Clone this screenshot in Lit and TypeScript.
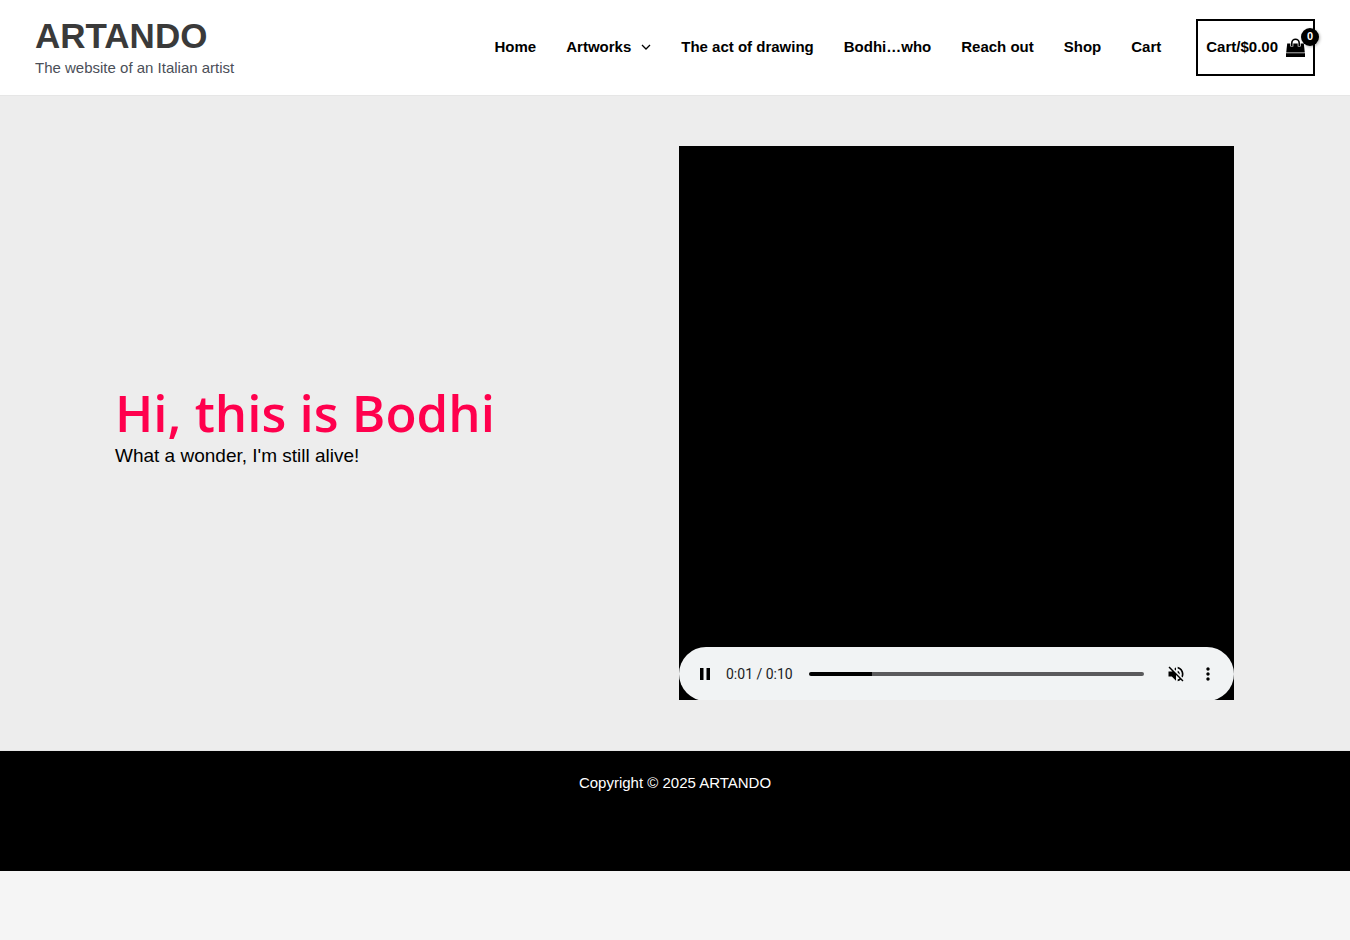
import { LitElement, html, css, svg } from "lit";
import { customElement, property, state } from "lit/decorators.js";
import { styleMap } from "lit/directives/style-map.js";

interface NavItem {
  label: string;
  submenu?: boolean;
}

const NAV: NavItem[] = [
  { label: "Home" },
  { label: "Artworks", submenu: true },
  { label: "The act of drawing" },
  { label: "Bodhi…who" },
  { label: "Reach out" },
  { label: "Shop" },
  { label: "Cart" },
];

const chevron = svg`<path d="M1 1 L5 5 L9 1" fill="none" stroke="currentColor" stroke-width="1.3" />`;

@customElement("site-header")
export class SiteHeader extends LitElement {
  static styles = css`
    :host {
      display: block;
      background: #fff;
      border-bottom: 1px solid #e6e6e6;
    }
    .bar {
      display: flex;
      align-items: center;
      justify-content: space-between;
      min-height: 95px;
      padding: 0 35px;
      box-sizing: border-box;
    }
    a {
      color: inherit;
      text-decoration: none;
    }
    .title {
      margin: 0;
      font-size: 35px;
      line-height: 40px;
      font-weight: 700;
      color: #3a3a3a;
    }
    .tagline {
      margin: 0;
      font-size: 15px;
      line-height: 24px;
      color: #4b4f58;
    }
    .right {
      display: flex;
      align-items: center;
      gap: 35px;
    }
    .menu {
      display: flex;
      gap: 30px;
      margin: 0;
      padding: 0 0 2px;
      list-style: none;
      font-size: 15px;
      line-height: 24px;
      font-weight: 700;
      white-space: nowrap;
    }
    .link {
      display: flex;
      align-items: center;
      gap: 10px;
    }
    .cart {
      display: flex;
      align-items: center;
      gap: 8px;
      height: 57px;
      padding: 0 8px;
      box-sizing: border-box;
      border: 2px solid #000;
      font-size: 15px;
      line-height: 24px;
      font-weight: 700;
      white-space: nowrap;
    }
    .total {
      padding-bottom: 2px;
    }
    .bag {
      position: relative;
      display: block;
      width: 19px;
      height: 20px;
    }
    .bag svg {
      display: block;
    }
    .count {
      position: absolute;
      top: -10px;
      right: -14px;
      width: 18px;
      height: 18px;
      border-radius: 50%;
      background: #000;
      color: #fff;
      font-size: 11px;
      line-height: 17px;
      text-align: center;
      box-shadow: 1px 1px 3px rgba(0, 0, 0, 0.3);
    }
  `;

  render() {
    return html`
      <header class="bar">
        <div>
          <p class="title"><a href="#">ARTANDO</a></p>
          <p class="tagline">The website of an Italian artist</p>
        </div>
        <div class="right">
          <nav aria-label="Site">
            <ul class="menu">
              ${NAV.map(
                (item) => html`<li>
                  <a class="link" href="#"
                    >${item.label}${item.submenu
                      ? html`<svg width="10" height="6" viewBox="0 0 10 6" aria-hidden="true">${chevron}</svg>`
                      : null}</a
                  >
                </li>`
              )}
            </ul>
          </nav>
          <a class="cart" href="#">
            <span class="total">Cart/$0.00</span>
            <span class="bag">
              <svg width="19" height="20" viewBox="0 0 19 20" aria-hidden="true">
                <path d="M1.2 5.6h16.6l1 8.9H.2z" fill="#000" />
                <path d="M0 15.2h19V19H0z" fill="#000" />
                <path d="M5.8 8.6V5a3.7 3.7 0 0 1 7.4 0V8.6" fill="none" stroke="#fff" stroke-width="3" />
                <path d="M5.8 8V5a3.7 3.7 0 0 1 7.4 0V8" fill="none" stroke="#000" stroke-width="1.6" />
              </svg>
              <span class="count">0</span>
            </span>
          </a>
        </div>
      </header>
    `;
  }
}

@customElement("media-player")
export class MediaPlayer extends LitElement {
  @property({ type: Number }) duration = 10;
  @state() private position = 1.88;

  static styles = css`
    :host {
      display: flex;
      flex-direction: column;
      justify-content: flex-end;
      width: 100%;
      max-width: 555px;
      height: 554px;
      background: #000;
      overflow: hidden;
    }
    .controls {
      display: flex;
      align-items: center;
      height: 54px;
      flex: none;
      margin-bottom: -1px;
      padding: 0 10px;
      border-radius: 27px;
      background: #f1f3f4;
    }
    button {
      display: flex;
      align-items: center;
      justify-content: center;
      width: 32px;
      height: 32px;
      padding: 0;
      border: 0;
      background: none;
      color: #000;
    }
    .time {
      margin: 0 16px 0 5px;
      font: 14px/20px Roboto, "Liberation Sans", sans-serif;
      color: #202124;
      white-space: nowrap;
    }
    .seek {
      flex: 1;
      min-width: 0;
      height: 4px;
      margin: 0 16px 0 0;
      border-radius: 2px;
      appearance: none;
      background: linear-gradient(#000, #000) 0 0 / var(--played) 100% no-repeat #5a5a5c;
    }
    .seek::-webkit-slider-thumb {
      appearance: none;
      width: 1px;
      height: 4px;
      background: transparent;
    }
  `;

  private onSeek(e: Event) {
    this.position = Number((e.target as HTMLInputElement).value);
  }

  private clock(seconds: number) {
    return `0:${String(Math.floor(seconds)).padStart(2, "0")}`;
  }

  render() {
    const played = { "--played": `${(this.position / this.duration) * 100}%` };
    return html`
      <div class="controls">
        <button aria-label="Pause">
          <svg width="12" height="12" viewBox="0 0 12 12" aria-hidden="true">
            <path d="M1 0h3.5v12H1zM7.5 0H11v12H7.5z" fill="currentColor" />
          </svg>
        </button>
        <span class="time">${this.clock(this.position)} / ${this.clock(this.duration)}</span>
        <input
          class="seek"
          type="range"
          aria-label="Seek"
          min="0"
          step="0.01"
          .max=${String(this.duration)}
          .value=${String(this.position)}
          style=${styleMap(played)}
          @input=${this.onSeek}
        />
        <button aria-label="Unmute">
          <svg width="20" height="20" viewBox="0 0 24 24" fill="currentColor" aria-hidden="true">
            <path
              d="M16.5 12c0-1.77-1.02-3.29-2.5-4.03v2.21l2.45 2.45c.03-.2.05-.41.05-.63zm2.5 0c0 .94-.2 1.82-.54 2.64l1.51 1.51C20.63 14.91 21 13.5 21 12c0-4.28-2.99-7.86-7-8.77v2.06c2.89.86 5 3.54 5 6.71zM4.27 3L3 4.27 7.73 9H3v6h4l5 5v-6.73l4.25 4.25c-.67.52-1.42.93-2.25 1.18v2.06c1.38-.31 2.63-.95 3.69-1.81L19.73 21 21 19.73l-9-9L4.27 3zM12 4L9.91 6.09 12 8.18V4z"
            />
          </svg>
        </button>
        <button aria-label="More options">
          <svg width="20" height="20" viewBox="0 0 24 24" fill="currentColor" aria-hidden="true">
            <path
              d="M12 8c1.1 0 2-.9 2-2s-.9-2-2-2-2 .9-2 2 .9 2 2 2zm0 2c-1.1 0-2 .9-2 2s.9 2 2 2 2-.9 2-2-.9-2-2-2zm0 6c-1.1 0-2 .9-2 2s.9 2 2 2 2-.9 2-2-.9-2-2-2z"
            />
          </svg>
        </button>
      </div>
    `;
  }
}

@customElement("app-root")
export class AppRoot extends LitElement {
  static styles = css`
    :host {
      display: block;
      min-height: 100vh;
      background: #f5f5f5;
      color: #000;
      font-family: "Liberation Sans", Arial, sans-serif;
    }
    .hero {
      padding: 50px 20px;
      background: #ededed;
      border-bottom: 1px solid #e6e6e6;
    }
    .columns {
      display: grid;
      grid-template-columns: 1fr 1fr;
      gap: 8px;
      align-items: center;
      max-width: 1120px;
      margin: 0 auto;
    }
    .intro {
      padding-top: 8px;
    }
    .heading {
      margin: 0;
      font-family: "Open Sans", "Noto Sans", sans-serif;
      font-size: 51px;
      line-height: 58px;
      font-weight: 600;
      color: #ff004d;
    }
    .lead {
      margin: 0;
      font-size: 19px;
      line-height: 30px;
    }
    .footer {
      padding: 20px 20px 76px;
      background: #000;
      color: #fff;
      font-size: 15px;
      line-height: 24px;
      text-align: center;
    }
    .copyright {
      margin: 0;
    }
  `;

  render() {
    return html`
      <site-header></site-header>
      <main class="hero">
        <div class="columns">
          <div class="intro">
            <h1 class="heading">Hi, this is Bodhi</h1>
            <p class="lead">What a wonder, I'm still alive!</p>
          </div>
          <media-player></media-player>
        </div>
      </main>
      <footer class="footer">
        <p class="copyright">Copyright © 2025 ARTANDO</p>
      </footer>
    `;
  }
}
